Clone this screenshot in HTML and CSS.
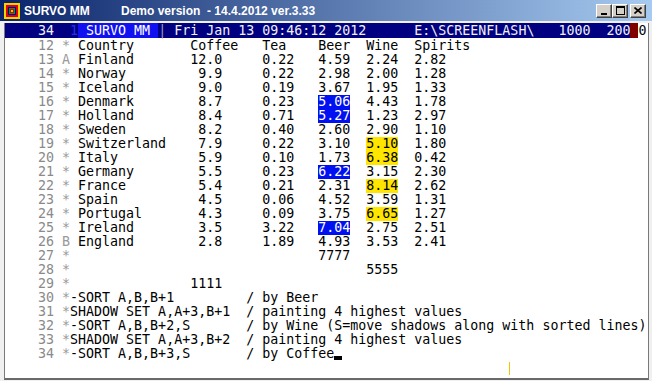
FILE: index.html
```html
<!DOCTYPE html>
<html lang="en">
<head>
  <meta charset="UTF-8">
  <title>SURVO MM</title>
  <link rel="stylesheet" href="styles.css">
</head>
<body>
<div class="window">
  <div class="titlebar">
    <svg class="app-icon" width="16" height="16" viewBox="0 0 16 16">
      <rect x="0" y="0" width="16" height="16" fill="#f8d000"/>
      <rect x="2" y="2" width="12" height="12" fill="#e00000"/>
      <rect x="4" y="4" width="8" height="8" fill="#0000c0"/>
      <rect x="5" y="5" width="6" height="6" fill="#00a000"/>
      <rect x="6" y="6" width="4" height="4" fill="#e00000"/>
      <rect x="7" y="7" width="2" height="2" fill="#f8d000"/>
    </svg>
    <span class="title">SURVO MM</span>
    <span class="subtitle">Demo version  - 14.4.2012 ver.3.33</span>
    <div class="buttons">
      <span class="btn"><svg width="8" height="8"><rect x="1" y="6" width="6" height="2" fill="#000"/></svg></span>
      <span class="btn"><svg width="9" height="9"><rect x="0.5" y="0.5" width="8" height="8" fill="none" stroke="#000"/><rect x="0" y="0" width="9" height="2" fill="#000"/></svg></span>
      <span class="btn close"><svg width="8" height="7"><path d="M0.5 0.5 L7.5 6.5 M7.5 0.5 L0.5 6.5" stroke="#000" stroke-width="1.6"/></svg></span>
    </div>
  </div>

  <div class="client">
    <div class="status">
      <span class="bar">    34  <span class="dim">1</span><span class="tag"> SURVO MM </span><span class="sep">|</span> Fri Jan 13 09:46:12 2012      E:\SCREENFLASH\   1000  200</span><span class="red"></span><span class="end">0</span>
    </div>

    <div class="edit">
      <div class="row"><span class="no">    12 </span><span class="ctl">*</span> Country       Coffee   Tea    Beer  Wine  Spirits</div>
      <div class="row"><span class="no">    13 </span><span class="ctl">A</span> Finland       12.0     0.22   4.59  2.24  2.82</div>
      <div class="row"><span class="no">    14 </span><span class="ctl">*</span> Norway         9.9     0.22   2.98  2.00  1.28</div>
      <div class="row"><span class="no">    15 </span><span class="ctl">*</span> Iceland        9.0     0.19   3.67  1.95  1.33</div>
      <div class="row"><span class="no">    16 </span><span class="ctl">*</span> Denmark        8.7     0.23   <span class="hb">5.06</span>  4.43  1.78</div>
      <div class="row"><span class="no">    17 </span><span class="ctl">*</span> Holland        8.4     0.71   <span class="hb">5.27</span>  1.23  2.97</div>
      <div class="row"><span class="no">    18 </span><span class="ctl">*</span> Sweden         8.2     0.40   2.60  2.90  1.10</div>
      <div class="row"><span class="no">    19 </span><span class="ctl">*</span> Switzerland    7.9     0.22   3.10  <span class="hy">5.10</span>  1.80</div>
      <div class="row"><span class="no">    20 </span><span class="ctl">*</span> Italy          5.9     0.10   1.73  <span class="hy">6.38</span>  0.42</div>
      <div class="row"><span class="no">    21 </span><span class="ctl">*</span> Germany        5.5     0.23   <span class="hb">6.22</span>  3.15  2.30</div>
      <div class="row"><span class="no">    22 </span><span class="ctl">*</span> France         5.4     0.21   2.31  <span class="hy">8.14</span>  2.62</div>
      <div class="row"><span class="no">    23 </span><span class="ctl">*</span> Spain          4.5     0.06   4.52  3.59  1.31</div>
      <div class="row"><span class="no">    24 </span><span class="ctl">*</span> Portugal       4.3     0.09   3.75  <span class="hy">6.65</span>  1.27</div>
      <div class="row"><span class="no">    25 </span><span class="ctl">*</span> Ireland        3.5     3.22   <span class="hb">7.04</span>  2.75  2.51</div>
      <div class="row"><span class="no">    26 </span><span class="ctl">B</span> England        2.8     1.89   4.93  3.53  2.41</div>
      <div class="row"><span class="no">    27 </span><span class="ctl">*</span>                               7777</div>
      <div class="row"><span class="no">    28 </span><span class="ctl">*</span>                                     5555</div>
      <div class="row"><span class="no">    29 </span><span class="ctl">*</span>               1111</div>
      <div class="row"><span class="no">    30 </span><span class="ctl">*</span>-SORT A,B,B+1         / by Beer</div>
      <div class="row"><span class="no">    31 </span><span class="ctl">*</span>SHADOW SET A,A+3,B+1  / painting 4 highest values</div>
      <div class="row"><span class="no">    32 </span><span class="ctl">*</span>-SORT A,B,B+2,S       / by Wine (S=move shadows along with sorted lines)</div>
      <div class="row"><span class="no">    33 </span><span class="ctl">*</span>SHADOW SET A,A+3,B+2  / painting 4 highest values</div>
      <div class="row"><span class="no">    34 </span><span class="ctl">*</span>-SORT A,B,B+3,S       / by Coffee<span class="cursor"></span></div>
    </div>

    <span class="mark"></span>
  </div>
</div>
</body>
</html>
```

FILE: styles.css
```css
body {
  margin: 0;
  background: #f0f0f0;
}
.window {
  width: 652px;
  height: 381px;
  background: #f0f0f0;
  overflow: hidden;
}
.titlebar {
  height: 21px;
  display: flex;
  align-items: center;
  background: linear-gradient(to right, #0a246a, #a6caf0);
  color: #fff;
  font: bold 12px "Liberation Sans", Arial, sans-serif;
}
.app-icon {
  flex: none;
  margin: 0 4px;
}
.title {
  width: 97px;
}
.subtitle {
  white-space: pre;
}
.buttons {
  display: flex;
  margin-left: auto;
  margin-right: 6px;
}
.btn {
  width: 16px;
  height: 14px;
  box-sizing: border-box;
  display: flex;
  align-items: center;
  justify-content: center;
  background: #d4d0c8;
  border: 1px solid;
  border-color: #fff #404040 #404040 #fff;
  box-shadow: inset -1px -1px #808080;
}
.btn.close {
  margin-left: 2px;
}
.client {
  position: relative;
  margin: 2px 0 0 4px;
  width: 643px;
  height: 355px;
  background: #fff;
  border-left: 1px solid #7a7a7a;
  border-right: 1px solid #7a7a7a;
  border-bottom: 2px solid #6a6a6a;
  font-family: "DejaVu Sans Mono", monospace;
  font-size: 13.3px;
}
.status {
  display: flex;
  height: 15px;
  line-height: 15px;
  white-space: pre;
}
.status .bar {
  background: #000080;
  color: #f0f0f0;
  padding-left: 1px;
}
.status .dim {
  color: #2a2aff;
}
.status .tag {
  background: #1010f0;
  color: #fff;
}
.status .sep {
  color: #9a9ab8;
}
.status .red {
  width: 8px;
  background: #800000;
}
.status .end {
  color: #000;
}
.edit {
  padding: 1px 0 0 1px;
}
.row {
  height: 14px;
  line-height: 14px;
  white-space: pre;
  color: #000;
}
.no {
  color: #8a8a8a;
}
.ctl {
  color: #9a9a9a;
}
.hb,
.hy {
  display: inline-block;
  height: 14px;
  vertical-align: top;
}
.hb {
  background: #0010f0;
  color: #fff;
}
.hy {
  background: #ffe600;
}
.cursor {
  display: inline-block;
  width: 8px;
  height: 13px;
  vertical-align: top;
  box-shadow: inset 0 -4px #000;
}
.mark {
  position: absolute;
  left: 504px;
  top: 339px;
  width: 1px;
  height: 13px;
  background: #f5c400;
}
```
